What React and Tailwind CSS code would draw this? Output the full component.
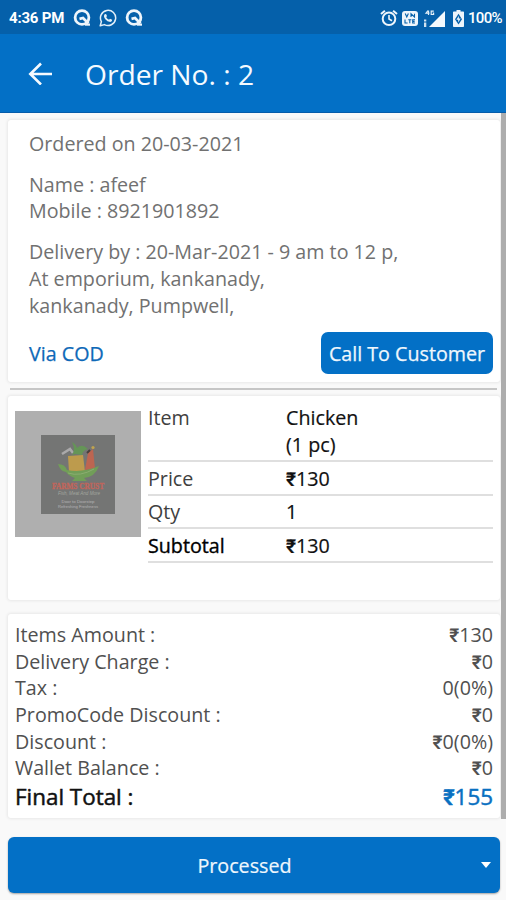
import React from "react";

function ChatQ() {
  return (
    <svg width="18" height="18" viewBox="0 0 18 18" fill="none" stroke="#eef5fb">
      <circle cx="9" cy="8.5" r="6.9" strokeWidth="2.8" />
      <path d="M6.5 9.8L10 9L15.5 14.5" strokeWidth="2.8" />
      <path d="M12 15.6H17" strokeWidth="2.2" />
    </svg>
  );
}

function WhatsApp() {
  return (
    <svg width="18" height="18" viewBox="0 0 18 18" fill="none" stroke="#e3eff8">
      <path d="M1.2 16.8L2.4 12.6A7.6 7.6 0 1 1 5.4 15.6Z" strokeWidth="1.5" strokeLinejoin="round" />
      <path d="M5.7 5.2L7 4.9L8 7.1L7.2 8.2Q8.2 10 10 10.8L11 9.8L13.2 10.8Q13.2 12.8 11.3 13Q8.3 12.8 6.3 10.2Q4 7.3 5.7 5.2Z" fill="#e3eff8" stroke="none" />
    </svg>
  );
}

function Alarm() {
  return (
    <svg width="18" height="18" viewBox="0 0 18 18" fill="none" stroke="#eef5fb">
      <circle cx="9" cy="9.8" r="6.3" strokeWidth="2" />
      <path d="M9 6V10L12 11.8" strokeWidth="1.6" />
      <path d="M1 5L4.9 1.7M17 5L13.1 1.7" strokeWidth="2" />
    </svg>
  );
}

function VoLte() {
  return (
    <svg width="16" height="15" viewBox="0 0 16 15" fill="none">
      <rect width="16" height="15" rx="3" fill="#eef5fb" />
      <path d="M3.2 2.5L4.8 6L6.4 2.5M9 6V2.8L12.5 6V2.8M3 8.5V12H5.6M6.3 8.8H9.4M7.8 8.8V12.3M13 8.8H10.7V12H13M10.7 10.4H12.6" stroke="#0560aa" strokeWidth="1.1" />
    </svg>
  );
}

function Signal() {
  return (
    <svg width="23" height="17" viewBox="0 0 23 17" fill="#f4f9fd">
      <path d="M22 1V17H6Z" />
      <path d="M1 9.5H3.3V11.5H1ZM1 12.5H3.3V17H1Z" opacity="0.85" />
      <path d="M5 .5L3 3.2H6.5M5.5 .5V5M10.8 1.2H8.2V4.5H10.6V3H9.6" fill="none" stroke="#e3eff8" strokeWidth="1.2" />
    </svg>
  );
}

function Battery() {
  return (
    <svg width="11" height="17" viewBox="0 0 11 17">
      <path d="M3.5 0H7.5V1.5H10.2Q11 1.5 11 2.3V16.2Q11 17 10.2 17H.8Q0 17 0 16.2V2.3Q0 1.5.8 1.5H3.5Z" fill="#eef5fb" />
      <path d="M5.5 3.7L2 9.3L5.5 14.5L9 9.3Z" fill="#0560aa" />
      <path d="M5.8 5.7L3.4 9.8H5.2V12.6L7.7 8.6H5.8Z" fill="#eef5fb" />
    </svg>
  );
}

function ProductImage() {
  return (
    <div className="flex h-[126px] w-[126px] shrink-0 items-center justify-center bg-[#afafaf]">
      <svg width="74" height="79" viewBox="0 0 74 79" className="bg-[#747574]">
        <path d="M21 19L29 14L32 18" fill="none" stroke="#aaa9aa" strokeWidth="2.6" />
        <path d="M27 21L42 20L44 37L28 37Z" fill="#bd9b4d" />
        <path d="M47 18L52 14L54 34L44 35Z" fill="#bd6551" />
        <path d="M31 7Q35 9 36 13Q41 8 47 14Q42 15 41 20L34 19L31 20Q35 15 31 7Z" fill="#659557" />
        <path d="M46 18L49 15" stroke="#493f3d" strokeWidth="2" />
        <circle cx="52" cy="12.5" r="1.6" fill="#c0a44e" />
        <path d="M17 29Q24 29 26 35Q41 38 58 31Q54 42 43 43L46 46H31L34 43Q28 41 25 37Q19 36 17 29Z" fill="#719e58" />
        <path d="M27 38Q39 42 53 34" stroke="#8bad70" fill="none" />
        <text x="37" y="54" textAnchor="middle" textLength="52" lengthAdjust="spacingAndGlyphs" fontFamily="Liberation Serif, serif" fontWeight="bold" fontSize="7.5" fill="#c2655b" stroke="#c2655b" strokeWidth="0.3">FARMS CRUST</text>
        <text x="38" y="60" textAnchor="middle" textLength="42" lengthAdjust="spacingAndGlyphs" fontFamily="Liberation Sans, sans-serif" fontStyle="italic" fontSize="4.5" fill="#a3a69f">Fish, Meat And More</text>
        <text x="37" y="67.5" textAnchor="middle" textLength="33" lengthAdjust="spacingAndGlyphs" fontFamily="Liberation Sans, sans-serif" fontSize="3.8" fill="#b4b4b4">Door to Doorstep</text>
        <text x="37" y="73" textAnchor="middle" textLength="40" lengthAdjust="spacingAndGlyphs" fontFamily="Liberation Sans, sans-serif" fontSize="3.8" fill="#b4b4b4">Refreshing Freshness</text>
      </svg>
    </div>
  );
}

function Rupee() {
  return <span className="font-['Roboto',sans-serif] text-[0.97em] font-semibold tracking-normal">₹</span>;
}

const card = "ml-2 w-[492px] rounded-[3px] bg-white shadow-[0_0_3px_1px_rgba(0,0,0,0.07)]";

function ItemRow({ label, children, className = "" }) {
  return (
    <div className={`flex border-b-2 border-[#dfdfdf] leading-[27px] ${className}`}>
      <span className="w-[138px]">{label}</span>
      <span className="text-[#111] [-webkit-text-stroke-width:0.2px]">{children}</span>
    </div>
  );
}

const totals = [
  ["Items Amount :", true, "130"],
  ["Delivery Charge :", true, "0"],
  ["Tax :", false, "0(0%)"],
  ["PromoCode Discount :", true, "0"],
  ["Discount :", true, "0(0%)"],
  ["Wallet Balance :", true, "0"],
];

export default function App() {
  return (
    <div className="flex h-[900px] w-[506px] flex-col overflow-hidden whitespace-nowrap bg-[#f9f9f9] font-['Open_Sans',sans-serif] text-[19.7px] font-normal">
      <div className="flex h-[34px] shrink-0 items-center bg-[#0560aa] pl-[9px] pr-1 pt-0.5 font-['Roboto',sans-serif] text-white">
        <span className="w-[64px] text-[15px] font-bold leading-none tracking-[-0.2px]">4:36 PM</span>
        <div className="flex gap-2">
          <ChatQ />
          <WhatsApp />
          <ChatQ />
        </div>
        <div className="ml-auto flex items-center">
          <Alarm />
          <div className="ml-[4px]"><VoLte /></div>
          <div className="ml-[5px]"><Signal /></div>
          <div className="ml-[7px]"><Battery /></div>
          <span className="ml-[4px] w-[34px] text-[15px] font-medium leading-none tracking-[-0.7px]">100%</span>
        </div>
      </div>
      <div className="flex h-[79px] shrink-0 items-center border-b border-[#055caa] bg-[#0370c6] pl-[28px] text-[#f5faff]">
        <svg width="24" height="24" viewBox="0 0 24 24" fill="none" stroke="#f5faff" strokeWidth="2.6">
          <path d="M24 13H2.5M13 2.5L2.3 13L13 23.5" />
        </svg>
        <h1 className="ml-[33px] pt-[3px] text-[28.2px] font-normal leading-none">Order No. : 2</h1>
      </div>

      <div className="flex h-[706px] shrink-0">
        <main className="w-[501px] pt-[7px]">
          <section className={`${card} h-[262px] pl-[21px] pr-[7px] pt-[11px] leading-[26.7px] text-[#717171]`}>
            <p>Ordered on 20-03-2021</p>
            <p className="mt-[14px]">Name : afeef</p>
            <p>Mobile : 8921901892</p>
            <p className="mt-[14px]">Delivery by : 20-Mar-2021 - 9 am to 12 p,</p>
            <p>At emporium, kankanady,</p>
            <p>kankanady, Pumpwell,</p>
            <div className="mt-[13px] flex items-center justify-between font-normal text-[#0e69b8] [-webkit-text-stroke-width:0.25px]">
              <span className="pt-[2px]">Via COD</span>
              <button className="h-[42px] w-[172px] rounded-[7px] bg-[#0370c6] pt-[3px] text-[#eff7fd]">Call To Customer</button>
            </div>
          </section>
          <div className="ml-[10px] mt-[6px] h-[2px] w-[487px] bg-[#c6c6c6]" />
          <section className={`${card} mt-[6px] flex h-[204px] pl-[7px] pr-[7px] text-[#404040]`}>
            <div className="pt-[15px]"><ProductImage /></div>
            <div className="ml-[7px] flex-1 pt-[8px]">
              <ItemRow label="Item" className="h-[58px]">Chicken<br />(1 pc)</ItemRow>
              <ItemRow label="Price" className="h-[34px] pt-[3px]"><Rupee />130</ItemRow>
              <ItemRow label="Qty" className="h-[33px] pt-[2px]">1</ItemRow>
              <ItemRow label={<span className="text-black [-webkit-text-stroke:0.35px_black]">Subtotal</span>} className="h-[34px] pt-[3px]"><Rupee />130</ItemRow>
            </div>
          </section>
          <section className={`${card} mt-[14px] h-[204px] pl-[7px] pr-[7px] pt-[8px] leading-[26.7px] text-[#505050]`}>
            {totals.map(([label, rupee, value]) => (
              <div key={label} className="flex h-[26.7px] justify-between">
                <span>{label}</span>
                <span>{rupee && <Rupee />}{value}</span>
              </div>
            ))}
            <div className="flex justify-between text-[22.4px] leading-[29px] [-webkit-text-stroke-width:0.5px]">
              <span className="text-[#111]">Final Total :</span>
              <span className="text-[#0970c1]"><Rupee />155</span>
            </div>
          </section>
        </main>
        <div className="w-[5px] bg-[#adadad]" />
      </div>

      <button className="ml-2 mt-[18px] flex h-[56px] w-[492px] shrink-0 items-center rounded-[6px] bg-[#0370c6] pr-[9px] font-normal text-[#eff7fd] shadow-[0_1px_2px_rgba(0,0,0,0.35)]">
        <span className="w-[473px] pt-px text-center [-webkit-text-stroke-width:0.2px]">Processed</span>
        <svg width="10" height="6" viewBox="0 0 10 6" className="shrink-0" fill="white"><path d="M0 0H10L5 6Z" /></svg>
      </button>
    </div>
  );
}
